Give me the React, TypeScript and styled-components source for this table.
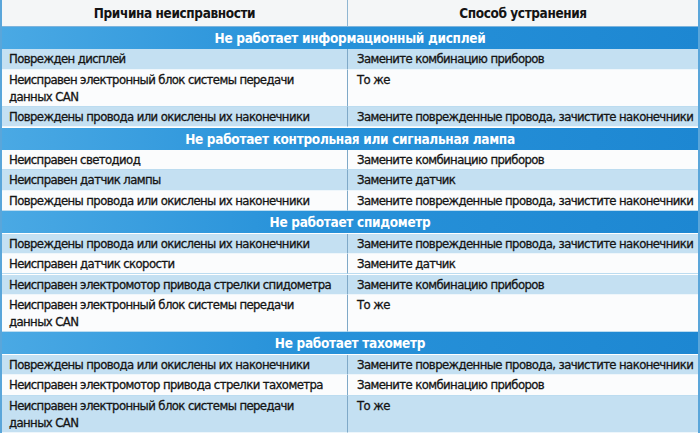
import React from 'react'
import styled, { createGlobalStyle } from 'styled-components'

const GlobalStyle = createGlobalStyle`
    html, body {
        margin: 0;
        padding: 0;
        background: #ffffff;
    }
    body {
        font-family: 'DejaVu Sans Condensed', 'Liberation Sans', sans-serif;
        color: #141414;
    }
`

const Table = styled.div`
    width: 700px;
    height: 433px;
    box-sizing: border-box;
    border-left: 2px solid #5aa6da;
    border-right: 2px solid #5aa6da;
    display: grid;
    grid-template-columns: 346px 1fr;
    overflow: hidden;
`

const HeadCell = styled.div<{ $last?: boolean }>`
    height: 27px;
    display: flex;
    align-items: center;
    justify-content: center;
    font-weight: bold;
    font-size: 13.5px;
    letter-spacing: -0.4px;
    background: #f4f6f7;
    border-right: ${(p) => (p.$last ? 'none' : '1px solid #8fb6d2')};
    border-bottom: 1px solid #7db4dc;
    box-sizing: border-box;
`

const Section = styled.div`
    grid-column: 1 / 3;
    height: 22px;
    display: flex;
    align-items: center;
    justify-content: center;
    color: #ffffff;
    font-weight: bold;
    font-size: 13.5px;
    letter-spacing: -0.3px;
    background: linear-gradient(90deg, #4aa9e4 0%, #2993da 40%, #1d87d2 100%);
    box-sizing: border-box;
`

const Cell = styled.div<{ $tinted?: boolean; $tall?: boolean; $right?: boolean }>`
    height: ${(p) => (p.$tall ? '37px' : '20.3px')};
    box-sizing: border-box;
    padding: ${(p) => (p.$right ? '1px 0 0 9px' : '1px 0 0 7px')};
    font-size: 13px;
    letter-spacing: -0.6px;
    line-height: 17px;
    white-space: nowrap;
    -webkit-text-stroke: 0.3px #141414;
    background: ${(p) => (p.$tinted ? '#c4e0f2' : '#fbfcfd')};
    border-bottom: 1px solid ${(p) => (p.$tinted ? '#eef6fb' : '#bcdcf0')};
    border-right: ${(p) => (p.$right ? 'none' : '1px solid #7fa9c8')};
`

type Row = {
    cause: string
    fix: string
    tinted?: boolean
    tall?: boolean
}

type Group = {
    title: string
    rows: Row[]
}

const CAN = 'Неисправен электронный блок системы передачи данных CAN'
const WIRES = 'Повреждены провода или окислены их наконечники'
const FIX_WIRES = 'Замените поврежденные провода, зачистите наконечники'

const groups: Group[] = [
    {
        title: 'Не работает информационный дисплей',
        rows: [
            { cause: 'Поврежден дисплей', fix: 'Замените комбинацию приборов', tinted: true },
            { cause: CAN, fix: 'То же', tall: true },
            { cause: WIRES, fix: FIX_WIRES, tinted: true },
        ],
    },
    {
        title: 'Не работает контрольная или сигнальная лампа',
        rows: [
            { cause: 'Неисправен светодиод', fix: 'Замените комбинацию приборов' },
            { cause: 'Неисправен датчик лампы', fix: 'Замените датчик', tinted: true },
            { cause: WIRES, fix: FIX_WIRES },
        ],
    },
    {
        title: 'Не работает спидометр',
        rows: [
            { cause: WIRES, fix: FIX_WIRES, tinted: true },
            { cause: 'Неисправен датчик скорости', fix: 'Замените датчик' },
            {
                cause: 'Неисправен электромотор привода стрелки спидометра',
                fix: 'Замените комбинацию приборов',
                tinted: true,
            },
            { cause: CAN, fix: 'То же', tall: true },
        ],
    },
    {
        title: 'Не работает тахометр',
        rows: [
            { cause: WIRES, fix: FIX_WIRES, tinted: true },
            {
                cause: 'Неисправен электромотор привода стрелки тахометра',
                fix: 'Замените комбинацию приборов',
            },
            { cause: CAN, fix: 'То же', tinted: true, tall: true },
        ],
    },
]

const App: React.FC = () => {
    return (
        <>
            <GlobalStyle />
            <Table>
                <HeadCell>Причина неисправности</HeadCell>
                <HeadCell $last>Способ устранения</HeadCell>
                {groups.map((g) => (
                    <React.Fragment key={g.title}>
                        <Section>{g.title}</Section>
                        {g.rows.map((r, i) => (
                            <React.Fragment key={g.title + i}>
                                <Cell $tinted={r.tinted} $tall={r.tall}>
                                    {r.cause === CAN ? (
                                        <>
                                            Неисправен электронный блок системы передачи
                                            <br />
                                            данных CAN
                                        </>
                                    ) : (
                                        r.cause
                                    )}
                                </Cell>
                                <Cell $tinted={r.tinted} $tall={r.tall} $right>
                                    {r.fix}
                                </Cell>
                            </React.Fragment>
                        ))}
                    </React.Fragment>
                ))}
            </Table>
        </>
    )
}

export default App
